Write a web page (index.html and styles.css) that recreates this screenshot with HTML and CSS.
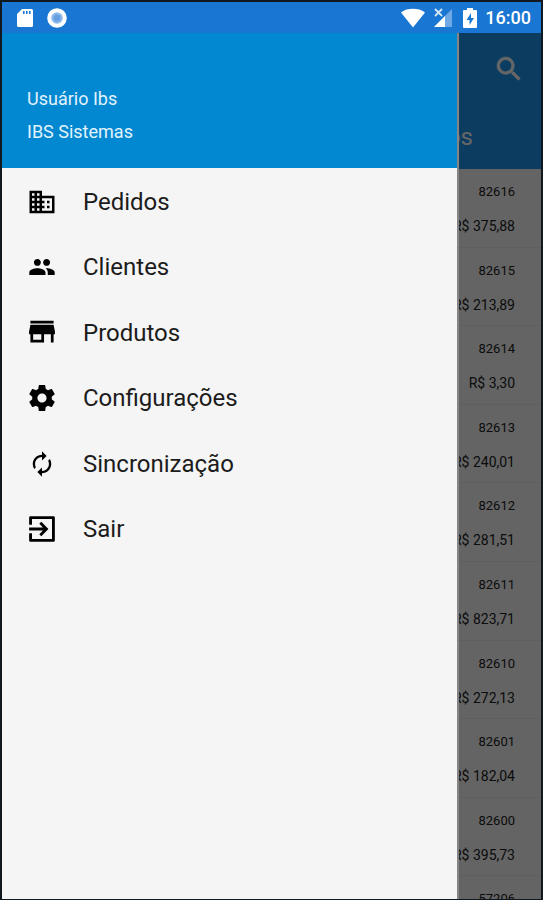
FILE: index.html
```html
<!DOCTYPE html>
<html lang="pt-BR">
<head>
<meta charset="utf-8">
<meta name="viewport" content="width=device-width, initial-scale=1">
<title>IBS Sistemas</title>
<link rel="stylesheet" href="styles.css">
</head>
<body>
<div class="screen">
  <div class="status-bar">
    <div class="status-group">
      <svg class="status-icon" viewBox="0 0 20 20" aria-hidden="true"><path fill="#fff" fill-rule="evenodd" d="M7 1h9.500a1.500 1.500 0 0 1 1.500 1.500v15a1.500 1.500 0 0 1-1.500 1.500h-13A1.500 1.500 0 0 1 2 17.500V6zM8 3v3h1.600V3zm3 0v3h1.600V3zm3 0v3h1.600V3z"/></svg>
      <svg class="status-icon" viewBox="0 0 20 20" aria-hidden="true"><circle cx="10" cy="10" r="7.800" fill="#8db9ea" stroke="#fff" stroke-width="4"/><circle cx="10" cy="10" r="3.500" fill="#659fdf"/></svg>
    </div>
    <div class="status-group status-right">
      <svg class="wifi" viewBox="0 0 24 20" aria-hidden="true"><path fill="#fff" d="M0 4.500C3.500 1.800 7.500.8 12 .8s8.500 1 12 3.700L12 19.500z"/></svg>
      <svg class="status-icon" viewBox="0 0 20 20" aria-hidden="true"><path fill="#70a8e5" d="M19 1v18H1z"/><path fill="#fff" d="M12 8v11H1z"/><path d="M0 0h12v8H0z" fill="#1976d2"/><path d="m2 1 7 7m0-7L2 8" stroke="#d5e6f8" stroke-width="1.800"/></svg>
      <svg class="battery" viewBox="0 0 14 20" aria-hidden="true"><path fill="#fff" fill-rule="evenodd" d="M4 0h6v2h3a1 1 0 0 1 1 1v16a1 1 0 0 1-1 1H1a1 1 0 0 1-1-1V3a1 1 0 0 1 1-1h3zM8 5l-4.500 7H6.500v5L11 10H8z"/></svg>
      <span class="clock">16:00</span>
    </div>
  </div>
  <div class="app">
    <main class="orders">
      <header class="app-bar">
        <button class="search" type="button" aria-label="Buscar"><svg viewBox="0 0 24 24"><path fill="currentColor" stroke="currentColor" stroke-width=".5" d="M15.500 14h-.79l-.28-.27A6.470 6.470 0 0 0 16 9.500 6.500 6.500 0 1 0 9.500 16c1.610 0 3.090-.59 4.230-1.570l.27.28v.79l5 4.990L20.490 19l-4.990-5zm-6 0C7.010 14 5 11.990 5 9.500S7.010 5 9.500 5 14 7.010 14 9.500 11.990 14 9.500 14z"/></svg></button>
        <h1>Pedidos</h1>
      </header>
      <ul class="order-list">
        <li><span class="number">82616</span><span>R$ 375,88</span></li>
        <li><span class="number">82615</span><span>R$ 213,89</span></li>
        <li><span class="number">82614</span><span>R$ 3,30</span></li>
        <li><span class="number">82613</span><span>R$ 240,01</span></li>
        <li><span class="number">82612</span><span>R$ 281,51</span></li>
        <li><span class="number">82611</span><span>R$ 823,71</span></li>
        <li><span class="number">82610</span><span>R$ 272,13</span></li>
        <li><span class="number">82601</span><span>R$ 182,04</span></li>
        <li><span class="number">82600</span><span>R$ 395,73</span></li>
        <li><span class="number">57206</span></li>
      </ul>
    </main>
    <div class="scrim"></div>
    <aside class="drawer">
      <div class="profile">
        <p>Usuário Ibs</p>
        <p>IBS Sistemas</p>
      </div>
      <nav class="menu">
        <a href="#pedidos"><svg viewBox="0 0 24 24"><path d="M12 7V3H2v18h20V7H12zM6 19H4v-2h2v2zm0-4H4v-2h2v2zm0-4H4V9h2v2zm0-4H4V5h2v2zm4 12H8v-2h2v2zm0-4H8v-2h2v2zm0-4H8V9h2v2zm0-4H8V5h2v2zm10 12h-8v-2h2v-2h-2v-2h2v-2h-2V9h8v10zm-2-8h-2v2h2v-2zm0 4h-2v2h2v-2z"/></svg>Pedidos</a>
        <a href="#clientes"><svg viewBox="-1 -1 26 26"><path d="M16 11c1.660 0 2.990-1.340 2.990-3S17.660 5 16 5s-3 1.340-3 3 1.340 3 3 3zm-8 0c1.660 0 2.990-1.340 2.990-3S9.660 5 8 5 5 6.340 5 8s1.340 3 3 3zm0 2c-2.330 0-7 1.170-7 3.500V19h14v-2.500C15 14.170 10.330 13 8 13zm8 0c-.29 0-.62.020-.97.050 1.160.84 1.970 1.970 1.970 3.450V19h6v-2.500c0-2.330-4.670-3.500-7-3.500z"/></svg>Clientes</a>
        <a href="#produtos"><svg viewBox="1 2 22 22"><path d="M20.500 4h-17v2h17V4zm1 10v-2l-1-5h-17l-1 5v2h1v6h10v-6h5v6h2v-6h1zm-10 4h-6v-4h6v4z"/></svg>Produtos</a>
        <a href="#configuracoes"><svg viewBox="0.5 0.5 23 23"><path d="M19.430 12.980c.040-.32.070-.64.070-.98s-.030-.66-.070-.98l2.110-1.650c.19-.15.240-.42.120-.64l-2-3.460c-.12-.22-.39-.3-.61-.22l-2.490 1c-.52-.4-1.080-.73-1.690-.98l-.38-2.650A.488.488 0 0 0 14 2h-4c-.25 0-.46.180-.49.420l-.38 2.650c-.61.250-1.170.59-1.690.98l-2.490-1c-.23-.09-.49 0-.61.220l-2 3.460c-.13.220-.07.490.12.640l2.110 1.650c-.04.320-.07.650-.07.980s.030.660.070.980l-2.110 1.650c-.19.150-.24.420-.12.640l2 3.460c.12.220.39.300.61.220l2.490-1c.52.400 1.080.730 1.690.980l.38 2.650c.030.240.240.420.490.420h4c.25 0 .46-.18.49-.42l.38-2.650c.61-.25 1.170-.59 1.690-.98l2.490 1c.23.090.49 0 .61-.22l2-3.460c.12-.22.070-.49-.12-.64l-2.110-1.650zM12 15.500c-1.930 0-3.500-1.570-3.500-3.500s1.570-3.500 3.500-3.500 3.500 1.570 3.500 3.500-1.570 3.500-3.500 3.500z"/></svg>Configurações</a>
        <a href="#sincronizacao"><svg viewBox="-1 -1 26 26"><path d="M12 6v3l4-4-4-4v3c-4.420 0-8 3.580-8 8 0 1.570.46 3.030 1.240 4.260L6.700 14.800A5.870 5.870 0 0 1 6 12c0-3.310 2.690-6 6-6zm6.760 1.740L17.300 9.200c.44.840.7 1.790.7 2.800 0 3.310-2.690 6-6 6v-3l-4 4 4 4v-3c4.420 0 8-3.580 8-8 0-1.570-.46-3.030-1.240-4.260z"/></svg>Sincronização</a>
        <a href="#sair"><svg viewBox="1.500 1.500 21 21"><path d="M10.090 15.590 11.500 17l5-5-5-5-1.410 1.410L12.670 11H3v2h9.670l-2.580 2.590zM20 3H4a1 1 0 0 0-1 1v5h2V5h14v14H5v-4H3v5a1 1 0 0 0 1 1h16a1 1 0 0 0 1-1V4a1 1 0 0 0-1-1z"/></svg>Sair</a>
      </nav>
    </aside>
  </div>
</div>
</body>
</html>
```
FILE: styles.css
```css
* {
  box-sizing: border-box;
}

body {
  margin: 0;
  font-family: Roboto, "Liberation Sans", sans-serif;
}

.screen {
  display: flex;
  flex-direction: column;
  height: 100vh;
  overflow: hidden;
  border: 2px solid #101820;
  border-bottom-width: 1px;
}

.status-bar {
  display: flex;
  flex: none;
  align-items: center;
  justify-content: space-between;
  height: 31px;
  padding: 0 10px 0 13px;
  color: #fff;
  background: #1976d2;
}

.status-group {
  display: flex;
  align-items: center;
  gap: 12px;
}

.status-right {
  gap: 8px;
}

.status-icon {
  width: 20px;
  height: 20px;
}

.wifi {
  width: 24px;
  height: 20px;
}

.battery {
  width: 14px;
  height: 20px;
  margin-left: 2px;
}

.clock {
  font-size: 18px;
  font-weight: 500;
  line-height: 24px;
}

.app {
  position: relative;
  flex: 1;
  min-height: 0;
  overflow: hidden;
}

.orders {
  background: #fafafa;
}

.app-bar {
  display: flex;
  flex-direction: column;
  align-items: flex-end;
  gap: 34px;
  height: 136px;
  padding: 20px 16px 0 0;
  color: #fff;
  background: #2196f3;
}

.search {
  width: 32px;
  height: 32px;
  padding: 0;
  border: 0;
  color: inherit;
  background: none;
}

.search svg {
  display: block;
}

.app-bar h1 {
  margin: 0 52px 0 0;
  font-size: 24px;
  font-weight: 400;
  line-height: 36px;
}

.order-list {
  display: grid;
  grid-template-rows: repeat(10, 1fr);
  height: 786px;
  margin: 0;
  padding: 0;
  list-style: none;
}

.order-list li {
  display: flex;
  flex-direction: column;
  align-items: flex-end;
  gap: 14px;
  padding: 13px 26px 0 0;
  border-bottom: 1px solid #eee;
  color: #222;
  font-size: 14px;
  line-height: 20px;
}

.order-list .number {
  font-size: 13px;
}

.scrim {
  position: absolute;
  inset: 0;
  background: rgb(0 0 0 / 60%);
}

.drawer {
  position: absolute;
  inset: 0 auto 0 0;
  width: calc(85% - 1px);
  border-right: 2px solid #858585;
  background: #f5f5f5;
}

.profile {
  display: flex;
  flex-direction: column;
  gap: 8px;
  height: 135px;
  padding: 53px 25px 0;
  color: #e3f3fc;
  background: #0288d1;
  font-size: 18px;
  line-height: 25px;
}

.profile p {
  margin: 0;
}

.menu {
  display: grid;
  grid-template-rows: repeat(6, 1fr);
  height: 393px;
  margin-top: 1px;
}

.menu a {
  display: flex;
  align-items: center;
  gap: 26px;
  padding: 0 25px;
  color: #1c1c1c;
  font-size: 24px;
  line-height: 32px;
  text-decoration: none;
}

.menu svg {
  width: 30px;
  height: 30px;
  fill: #000;
}
```
